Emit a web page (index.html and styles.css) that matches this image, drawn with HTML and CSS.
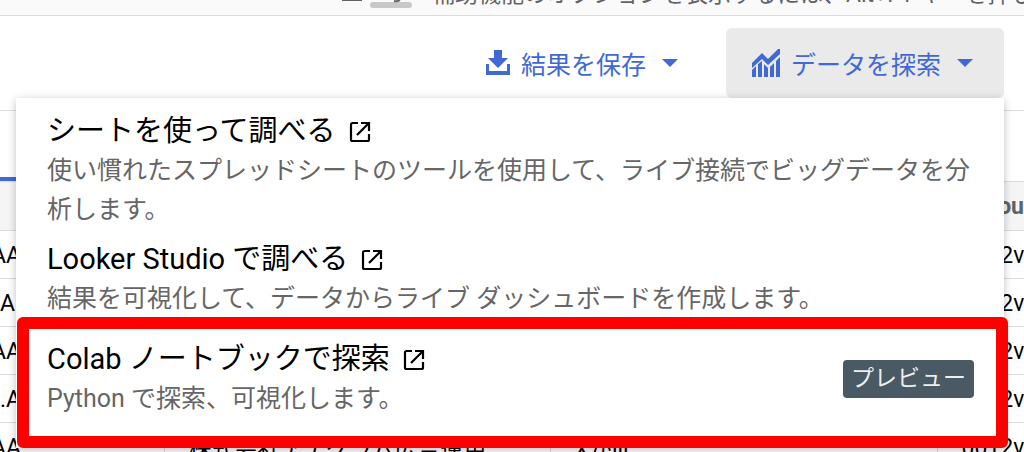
FILE: index.html
```html
<!DOCTYPE html>
<html lang="ja">
<head>
    <meta charset="UTF-8">
    <meta name="viewport" content="width=device-width, initial-scale=1.0">
    <title>クエリ結果</title>
    <link rel="stylesheet" href="styles.css">
</head>
<body>
    <svg class="sprite" aria-hidden="true">
        <symbol id="icon-open" viewBox="0 0 24 24">
            <path d="M10 3H4.500A1.500 1.500 0 0 0 3 4.500v15A1.500 1.500 0 0 0 4.500 21h15a1.500 1.500 0 0 0 1.500-1.500V14M13 3h8v8M21 3L9 15" fill="none" stroke="currentColor" stroke-width="2.200"/>
        </symbol>
    </svg>

    <div class="notice">
        <span class="notice-key" aria-hidden="true">
            <svg class="notice-icon" viewBox="0 0 80 16">
                <path d="M4 1h20" stroke="#5f6368" stroke-width="2"/>
                <rect x="32" y="3" width="42" height="6" rx="3" fill="#c8c8c8"/>
                <path d="M62 0q-1 3-6 2" fill="none" stroke="#5f6368" stroke-width="2"/>
            </svg>
        </span>
        <p class="notice-text">補助機能のオプションを表示するには、Alt+F1 キーを押します。</p>
    </div>

    <div class="toolbar">
        <button class="btn" type="button">
            <svg class="btn-icon" viewBox="0 0 24 26">
                <path d="M8 0h8v8h6l-10 10L2 8h6z" fill="currentColor"/>
                <path d="M0 14h3v7h18v-7h3v11H0z" fill="currentColor"/>
            </svg>
            結果を保存
            <span class="caret"></span>
        </button>
        <button class="btn btn-active" type="button" aria-expanded="true">
            <svg class="btn-icon btn-icon-wide" viewBox="0 0 28 28">
                <path d="M0 14L10 4l6 6L26 0h2v5L16 16l-6-6L0 19z" fill="currentColor"/>
                <path d="M0 21l4-4v11H0zM6 15l4-3v16H6zM12 15l4 4v9h-4zM18 18l4-4v14h-4zM24 12l4-4v20h-4z" fill="currentColor"/>
            </svg>
            データを探索
            <span class="caret"></span>
        </button>

        <div class="menu">
            <a class="menu-item menu-item-first" href="#sheets">
                <span class="menu-title">シートを使って調べる <svg class="open-icon"><use href="#icon-open"/></svg></span>
                <span class="menu-desc">使い慣れたスプレッドシートのツールを使用して、ライブ接続でビッグデータを分析します。</span>
            </a>
            <a class="menu-item" href="#looker">
                <span class="menu-title">Looker Studio で調べる <svg class="open-icon"><use href="#icon-open"/></svg></span>
                <span class="menu-desc">結果を可視化して、データからライブ ダッシュボードを作成します。</span>
            </a>
            <a class="menu-item menu-item-marked" href="#colab">
                <span>
                    <span class="menu-title">Colab ノートブックで探索 <svg class="open-icon"><use href="#icon-open"/></svg></span>
                    <span class="menu-desc">Python で探索、可視化します。</span>
                </span>
                <span class="badge">プレビュー</span>
            </a>
        </div>
    </div>

    <div class="tabs"><span class="tab-line"></span></div>

    <table class="results">
        <thead>
            <tr><th></th><th></th><th></th><th>ou</th></tr>
        </thead>
        <tbody>
            <tr><td class="scrolled">AA</td><td></td><td></td><td>0012v</td></tr>
            <tr><td>A..</td><td></td><td></td><td>0012v</td></tr>
            <tr><td class="scrolled">AA</td><td></td><td></td><td>0012v</td></tr>
            <tr><td>.A</td><td></td><td></td><td>0012v</td></tr>
            <tr><td class="scrolled">AA</td><td>株式会社アナグラム広告運用</td><td>Xがiii</td><td>0012v</td></tr>
        </tbody>
    </table>
</body>
</html>
```
FILE: styles.css
```css
* {
    margin: 0;
    padding: 0;
    box-sizing: border-box;
}

body {
    font-family: Roboto, "Noto Sans CJK JP", sans-serif;
    font-size: 25px;
    color: #000;
    background: #fff;
    height: 100vh;
    overflow: hidden;
}

.sprite {
    display: none;
}

.notice {
    display: flex;
    align-items: flex-end;
    height: 16px;
    padding-left: 338px;
    background: #fafafa;
    border-bottom: 1px solid #dcdcdc;
    overflow: hidden;
}

.notice-key {
    display: flex;
    flex: none;
    width: 94px;
}

.notice-icon {
    width: 80px;
    height: 16px;
}

.notice-text {
    font-size: 23px;
    line-height: 32px;
    padding-bottom: 4px;
    color: #5f6368;
    white-space: nowrap;
}

.toolbar {
    position: relative;
    display: flex;
    justify-content: flex-end;
    gap: 24px;
    padding: 12px 20px 12px 0;
    height: 95px;
    border-bottom: 1px solid #dcdcdc;
}

.btn {
    display: flex;
    align-items: center;
    height: 70px;
    padding: 0 24px;
    border: none;
    border-radius: 6px;
    background: none;
    font: inherit;
    color: #4169d6;
    white-space: nowrap;
    cursor: pointer;
}

.btn-active {
    padding: 0 31px 0 26px;
    background: #eaeaea;
}

.btn-icon {
    width: 24px;
    height: 26px;
    margin-right: 11px;
}

.btn-icon-wide {
    width: 28px;
    height: 28px;
}

.caret {
    margin-left: 16px;
    border: 8px solid transparent;
    border-top-color: currentColor;
    border-bottom: none;
}

.menu {
    position: absolute;
    z-index: 1;
    top: 82px;
    left: 16px;
    right: 20px;
    background: #fff;
    box-shadow: 0 2px 8px rgba(0, 0, 0, 0.25);
}

.menu-item {
    display: block;
    padding: 11px 31px 0;
    color: #000;
    text-decoration: none;
}

.menu-item-first {
    padding-top: 14px;
}

.menu-title {
    display: flex;
    align-items: center;
    gap: 12px;
    font-size: 29px;
    line-height: 39px;
}

.open-icon {
    width: 24px;
    height: 24px;
}

.menu-desc {
    display: block;
    line-height: 39px;
    color: #666;
}

/* highlighted entry, frame runs slightly past the menu edge */
.menu-item-marked {
    display: flex;
    justify-content: space-between;
    align-items: center;
    margin: -1px -4px 0 1px;
    padding: 11px 22px 18px 18px;
    border: 12px solid #f00;
    border-radius: 6px;
}

.badge {
    padding: 0 8px;
    border-radius: 4px;
    background: #495a64;
    color: #eee;
    font-size: 23px;
    line-height: 38px;
}

.tabs {
    display: flex;
    align-items: flex-end;
    height: 71px;
    border-bottom: 1px solid #dcdcdc;
}

.tab-line {
    width: 160px;
    height: 4px;
    background: #4169d6;
}

.results {
    width: 100%;
    table-layout: fixed;
    border-collapse: collapse;
    font-size: 23px;
    white-space: nowrap;
}

.results th,
.results td {
    height: 48px;
    padding-top: 2px;
    border-bottom: 1px solid #dcdcdc;
    text-align: left;
}

.results td + td {
    padding-left: 24px;
    border-left: 1px solid #dcdcdc;
}

.results th {
    background: #f5f5f5;
    color: #5f6368;
}

.results th:first-child {
    width: 164px;
}

.results th:nth-child(2) {
    width: 386px;
}

.results th:last-child {
    width: 87px;
    text-align: right;
}

.scrolled {
    text-indent: -9px;
}
```
